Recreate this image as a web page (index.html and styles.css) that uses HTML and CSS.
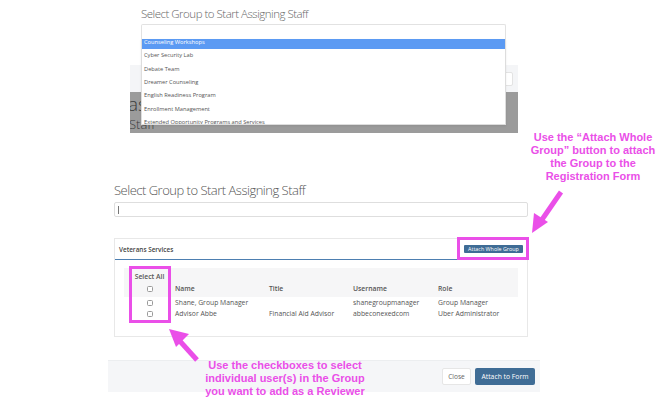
FILE: index.html
```html
<!DOCTYPE html>
<html>
<head>
<meta charset="utf-8">
<link rel="stylesheet" href="styles.css">
</head>
<body>
<div class="scene">
  <div class="top">
    <div class="bg-block">
      <div class="bg-light"><span class="bg-btn"></span></div>
      <div class="bg-dark">
        <div class="bg-as">as</div>
        <div class="bg-staff">Staff</div>
      </div>
    </div>
    <div class="select-pop">
      <h2 class="pop-title">Select Group to Start Assigning Staff</h2>
      <div class="pop-input"></div>
      <div class="pop-list">
        <ul class="pop-items">
          <li class="pop-item active">Counseling Workshops</li>
          <li class="pop-item">Cyber Security Lab</li>
          <li class="pop-item">Debate Team</li>
          <li class="pop-item">Dreamer Counseling</li>
          <li class="pop-item">English Readiness Program</li>
          <li class="pop-item">Enrollment Management</li>
          <li class="pop-item">Extended Opportunity Programs and Services</li>
        </ul>
      </div>
    </div>
  </div>

  <div class="modal">
    <div class="modal-body">
      <h2 class="title">Select Group to Start Assigning Staff</h2>
      <div class="input"><span class="caret"></span></div>
      <div class="panel">
        <div class="panel-head">
          <span class="panel-name">Veterans Services</span>
          <button class="btn-small">Attach Whole Group</button>
        </div>
        <div class="panel-body">
          <table class="staff">
            <thead>
              <tr>
                <th class="c-check"><div class="sel-all">Select All</div><span class="cb"></span></th>
                <th class="c-name">Name</th>
                <th class="c-title">Title</th>
                <th class="c-user">Username</th>
                <th class="c-role">Role</th>
              </tr>
            </thead>
            <tbody>
              <tr>
                <td class="c-check"><span class="cb"></span></td>
                <td>Shane, Group Manager</td>
                <td></td>
                <td>shanegroupmanager</td>
                <td>Group Manager</td>
              </tr>
              <tr>
                <td class="c-check"><span class="cb"></span></td>
                <td>Advisor Abbe</td>
                <td>Financial Aid Advisor</td>
                <td>abbeconexedcom</td>
                <td>Uber Administrator</td>
              </tr>
            </tbody>
          </table>
        </div>
      </div>
    </div>
    <div class="modal-foot">
      <button class="btn-close">Close</button>
      <button class="btn-primary">Attach to Form</button>
    </div>
  </div>

  <div class="hl hl-btn"></div>
  <div class="hl hl-check"></div>

  <p class="note note-right">Use the “Attach Whole<br>Group” button to attach<br>the Group to the<br>Registration Form</p>
  <p class="note note-bottom">Use the checkboxes to select<br>individual user(s) in the Group<br>you want to add as a Reviewer</p>

  <svg class="arrows" width="670" height="409" viewBox="0 0 670 409">
    <line x1="561" y1="192" x2="541" y2="221" stroke="#ea4fe8" stroke-width="5"/>
    <polygon points="532,233 534,213 548,222" fill="#ea4fe8"/>
    <line x1="197" y1="360" x2="178" y2="339" stroke="#ea4fe8" stroke-width="5"/>
    <polygon points="169,329 189,334 176,347" fill="#ea4fe8"/>
  </svg>
</div>
</body>
</html>
```

FILE: styles.css
```css
* { box-sizing: border-box; }
html, body { margin: 0; padding: 0; background: #fff; }
body { font-family: "Open Sans", "Liberation Sans", sans-serif; color: #555; }
.scene { position: relative; width: 670px; height: 409px; overflow: hidden; }

/* top faded screenshot */
.top { position: relative; height: 180px; padding-top: 65px; }
.bg-block { margin-left: 130px; width: 388px; }
.bg-light { height: 27px; background: #f4f5f7; display: flex; justify-content: flex-end; padding: 7px 5px 0 0; }
.bg-btn { width: 14px; height: 14px; background: #fff; border: 1px solid #e3e3e3; border-radius: 2px; }
.bg-dark { height: 41px; background: #9b9b9b; overflow: hidden; color: #3c3c3c; font-weight: 300; }
.bg-as { font-size: 19px; line-height: 19px; margin-top: 3px; margin-left: -2px; }
.bg-staff { font-size: 13px; line-height: 14px; margin-top: 3px; margin-left: -1px; }

.select-pop { position: absolute; left: 141px; top: 0; width: 365px; }
.pop-title { margin: 0; font-size: 11.5px; letter-spacing: -0.5px; line-height: 16px; font-weight: 300; color: #666; padding-top: 6px; height: 24px; }
.pop-input { height: 15px; background: #fff; border: 1px solid #e2e2e2; border-bottom: none; border-radius: 2px 2px 0 0; }
.pop-list { height: 86px; background: #fff; border: 1px solid #ddd; border-top: none; overflow: hidden; box-shadow: 0 1px 2px rgba(0,0,0,0.08); }
.pop-items { list-style: none; margin: -3px 0 0; padding: 0; }
.pop-item { height: 13.33px; line-height: 13.33px; font-size: 5.7px; padding-left: 2px; color: #555; white-space: nowrap; }
.pop-item.active { background: #5b9af3; color: #fff; }

/* modal */
.modal { margin-left: 108px; width: 432px; }
.modal-body { padding: 0 12px 0 6px; }
.title { margin: 0; font-size: 13px; letter-spacing: -0.5px; line-height: 20px; height: 22px; font-weight: 300; color: #555; }
.input { height: 15px; border: 1px solid #dedede; border-radius: 2px; padding: 3px 0 0 3px; }
.caret { display: block; width: 1px; height: 8px; background: #777; }
.panel { margin-top: 21px; height: 99px; border: 1px solid #e8e8e8; }
.panel-head { height: 21px; border-bottom: 1px solid #4d7fb1; display: flex; align-items: center; justify-content: space-between; padding: 0 4px 0 4px; }
.panel-name { font-size: 6.4px; font-weight: 600; color: #444; }
.btn-small { font-family: inherit; font-size: 5.4px; color: #fff; background: #3f6c95; border: none; border-radius: 1px; height: 8px; width: 59px; padding: 0; line-height: 8px; }
.panel-body { padding: 8px 9px 0 9px; }
.staff { width: 394px; border-collapse: collapse; font-size: 6.8px; color: #555; }
.staff thead tr { background: #f6f6f7; height: 29px; }
.staff th { text-align: left; font-weight: 600; color: #555; vertical-align: bottom; padding: 0 0 4px; }
.staff td { padding: 0; height: 11px; line-height: 11px; }
.c-check { width: 51px; text-align: center !important; }
.c-name { width: 94px; }
.c-title { width: 84px; }
.c-user { width: 85px; }
.sel-all { font-weight: 600; margin-bottom: 3px; line-height: 9px; }
.cb { display: inline-block; width: 6px; height: 6px; border: 1px solid #9a9a9a; border-radius: 1.5px; background: #fff; vertical-align: middle; }

.modal-foot { margin-top: 23px; height: 32px; background: #f5f6f8; border-top: 1px solid #eceef0; display: flex; justify-content: flex-end; align-items: center; gap: 4px; padding-right: 5px; }
.btn-close { font-family: inherit; width: 29px; height: 17px; font-size: 6.6px; color: #666; background: #fff; border: 1px solid #e6e6e6; border-radius: 2px; padding: 0; }
.btn-primary { font-family: inherit; width: 60px; height: 17px; font-size: 6.8px; color: #fff; background: #3f6c95; border: none; border-radius: 2px; padding: 0; }

/* annotations */
.hl { position: absolute; border: 3px solid #ea4fe8; }
.hl-btn { left: 457px; top: 237px; width: 72px; height: 23px; }
.hl-check { left: 129px; top: 266px; width: 42px; height: 57px; }
.note { position: absolute; margin: 0; font-family: "Liberation Sans", Arial, sans-serif; font-weight: bold; color: #ea4fe8; font-size: 11px; line-height: 13px; text-align: center; }
.note-right { left: 520px; top: 131px; width: 146px; }
.note-bottom { left: 185px; top: 359px; width: 200px; }
.arrows { position: absolute; left: 0; top: 0; pointer-events: none; }
```
